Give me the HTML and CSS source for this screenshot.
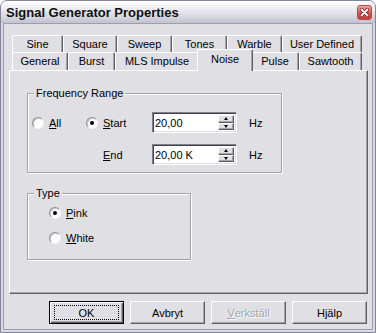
FILE: index.html
```html
<!DOCTYPE html>
<html lang="sv">

<head>
    <meta charset="UTF-8">
    <title>Signal Generator Properties</title>
    <link rel="stylesheet" href="styles.css">
</head>

<body>
    <div class="window">
        <div class="titlebar">
            <span class="title">Signal Generator Properties</span>
            <span class="close">
                <svg width="15" height="15" viewBox="0 0 15 15">
                    <path d="M4.5 4.5 L10.5 10.5 M10.5 4.5 L4.5 10.5" stroke="#7a2020" stroke-width="3.2" stroke-linecap="round" />
                    <path d="M4.5 4.5 L10.5 10.5 M10.5 4.5 L4.5 10.5" stroke="#fff" stroke-width="1.8" stroke-linecap="round" />
                </svg>
            </span>
        </div>

        <div class="client">
            <div class="tabs">
                <div class="tab-row row-top">
                    <div class="tab">Sine</div>
                    <div class="tab">Square</div>
                    <div class="tab">Sweep</div>
                    <div class="tab">Tones</div>
                    <div class="tab">Warble</div>
                    <div class="tab">User Defined</div>
                </div>
                <div class="tab-row row-bottom">
                    <div class="tab">General</div>
                    <div class="tab">Burst</div>
                    <div class="tab">MLS Impulse</div>
                    <div class="tab selected">Noise</div>
                    <div class="tab">Pulse</div>
                    <div class="tab">Sawtooth</div>
                </div>
            </div>

            <div class="panel">
                <div class="group freq">
                    <span class="caption">Frequency Range</span>
                    <div class="freq-grid">
                        <label class="radio"><span class="dot"></span><span><u>A</u>ll</span></label>
                        <label class="radio"><span class="dot checked"></span><span><u>S</u>tart</span></label>
                        <div class="spin">
                            <span class="value">20,00</span>
                            <span class="spin-btns">
                                <span class="spin-btn"><span class="arrow up"></span></span>
                                <span class="spin-btn"><span class="arrow down"></span></span>
                            </span>
                        </div>
                        <span class="unit">Hz</span>

                        <span></span>
                        <span class="end-label"><u>E</u>nd</span>
                        <div class="spin">
                            <span class="value">20,00 K</span>
                            <span class="spin-btns">
                                <span class="spin-btn"><span class="arrow up"></span></span>
                                <span class="spin-btn"><span class="arrow down"></span></span>
                            </span>
                        </div>
                        <span class="unit">Hz</span>
                    </div>
                </div>

                <div class="group type">
                    <span class="caption">Type</span>
                    <label class="radio"><span class="dot checked"></span><span><u>P</u>ink</span></label>
                    <label class="radio"><span class="dot"></span><span><u>W</u>hite</span></label>
                </div>
            </div>

            <div class="buttons">
                <button class="btn default"><span class="focus">OK</span></button>
                <button class="btn">Avbryt</button>
                <button class="btn" disabled><u>V</u>erkställ</button>
                <button class="btn">Hjälp</button>
            </div>
        </div>
    </div>
</body>

</html>
```

FILE: styles.css
```css
* {
    box-sizing: border-box;
}

body {
    margin: 0;
    font-family: "Liberation Sans", Arial, sans-serif;
    font-size: 11px;
    color: #000;
    background: #fff;
}

.window {
    width: 376px;
    height: 333px;
    display: flex;
    flex-direction: column;
    border: 1px solid #85859a;
    border-radius: 7px 7px 0 0;
    background: #d9d9e2;
    overflow: hidden;
}

/* caption */

.titlebar {
    height: 22px;
    display: flex;
    align-items: center;
    justify-content: space-between;
    padding: 0 3px 0 5px;
    background: linear-gradient(#ffffff, #ececf2 35%, #d8d8e2 70%, #c2c2d0);
}

.title {
    font-size: 13px;
    font-weight: bold;
    color: #101010;
}

.close {
    width: 15px;
    height: 15px;
    border-radius: 3px;
    border: 1px solid #b34a4a;
    background: linear-gradient(#f0a8a0, #d8584c 50%, #c64036);
    display: flex;
}

.close svg {
    margin: -1px;
}

/* dialog body */

.client {
    flex: 1;
    margin: 0 2px 2px;
    padding: 11px 4px 0 5px;
    border: 1px solid #9d9daf;
    background: #e0dfe3;
    display: flex;
    flex-direction: column;
}

.tabs {
    margin-left: 3px;
    width: 350px;
}

.tab-row {
    display: grid;
}

.row-top {
    height: 17px;
    grid-template-columns: 51px 54px 55px 55px 55px 80px;
}

.row-bottom {
    height: 18px;
    grid-template-columns: 56px 47px 84px 52px 48px 63px;
}

.tab {
    display: flex;
    align-items: center;
    justify-content: center;
    padding-bottom: 1px;
    background: #e0dfe3;
    border-top: 1px solid #fff;
    border-left: 1px solid #fff;
    border-right: 1px solid #5f5f6a;
    border-radius: 2px 2px 0 0;
    box-shadow: inset -1px 0 0 #a3a3ad;
}

.tab.selected {
    position: relative;
    z-index: 1;
    margin: -3px -2px -1px;
    padding-bottom: 3px;
}

.panel {
    width: 359px;
    height: 224px;
    padding: 22px 0 0 17px;
    border: 1px solid;
    border-color: #fff #5f5f6a #5f5f6a #fff;
    box-shadow: inset -1px -1px 0 #a3a3ad;
}

/* group boxes */

.group {
    position: relative;
    border: 1px solid #a3a3ab;
    box-shadow: inset 1px 1px 0 #fff, 1px 1px 0 #fff;
}

.caption {
    position: absolute;
    top: -7px;
    left: 6px;
    padding: 0 2px;
    line-height: 13px;
    background: #e0dfe3;
}

.freq {
    width: 255px;
    padding: 18px 0 7px 4px;
}

.freq-grid {
    display: grid;
    grid-template-columns: 54px 66px 85px auto;
    grid-template-rows: 21px 21px;
    row-gap: 11px;
    align-items: center;
}

.unit {
    padding-left: 12px;
}

.end-label {
    padding-left: 17px;
}

.type {
    width: 164px;
    margin-top: 20px;
    padding: 11px 0 13px 21px;
    display: flex;
    flex-direction: column;
    gap: 9px;
}

.radio {
    height: 16px;
    display: flex;
    align-items: center;
    gap: 5px;
}

.dot {
    width: 12px;
    height: 12px;
    border-radius: 50%;
    border: 1px solid;
    border-color: #8f8f98 #f4f4f6 #f4f4f6 #8f8f98;
    background: #fff;
    box-shadow: inset 1px 1px 0 #c9c9cf;
    display: flex;
    align-items: center;
    justify-content: center;
}

.dot.checked::after {
    content: "";
    width: 4px;
    height: 4px;
    border-radius: 50%;
    background: #000;
}

/* spin edits */

.spin {
    height: 21px;
    display: flex;
    padding: 2px;
    background: #fff;
    border: 1px solid;
    border-color: #80808a #fff #fff #80808a;
    box-shadow: inset 1px 1px 0 #404048, inset -1px -1px 0 #e0dfe3;
}

.value {
    flex: 1;
    line-height: 17px;
}

.spin-btns {
    width: 16px;
    display: flex;
    flex-direction: column;
}

.spin-btn {
    flex: 1;
    display: flex;
    align-items: center;
    justify-content: center;
    background: #e0dfe3;
    border: 1px solid;
    border-color: #fff #5f5f6a #5f5f6a #fff;
    box-shadow: inset -1px -1px 0 #a3a3ad;
}

.arrow {
    width: 1px;
    border-left: 2px solid transparent;
    border-right: 2px solid transparent;
}

.arrow.up {
    border-bottom: 3px solid #000;
}

.arrow.down {
    border-top: 3px solid #000;
}

/* buttons */

.buttons {
    display: flex;
    justify-content: flex-end;
    gap: 6px;
    margin-top: 7px;
    padding-right: 1px;
}

.btn {
    width: 75px;
    height: 23px;
    padding: 0;
    font-family: "Liberation Sans", Arial, sans-serif;
    font-size: 11px;
    color: #000;
    background: #e0dfe3;
    border: 1px solid;
    border-color: #fff #5f5f6a #5f5f6a #fff;
    box-shadow: inset -1px -1px 0 #a3a3ad;
    display: flex;
    align-items: center;
    justify-content: center;
}

.btn.default {
    border: 1px solid #000;
    box-shadow: inset 1px 1px 0 #fff, inset -1px -1px 0 #5f5f6a, inset -2px -2px 0 #a3a3ad;
}

.focus {
    width: 65px;
    height: 15px;
    border: 1px dotted #000;
    display: flex;
    align-items: center;
    justify-content: center;
}

.btn:disabled {
    color: #a3a3ab;
    text-shadow: 1px 1px 0 #fff;
}
```
